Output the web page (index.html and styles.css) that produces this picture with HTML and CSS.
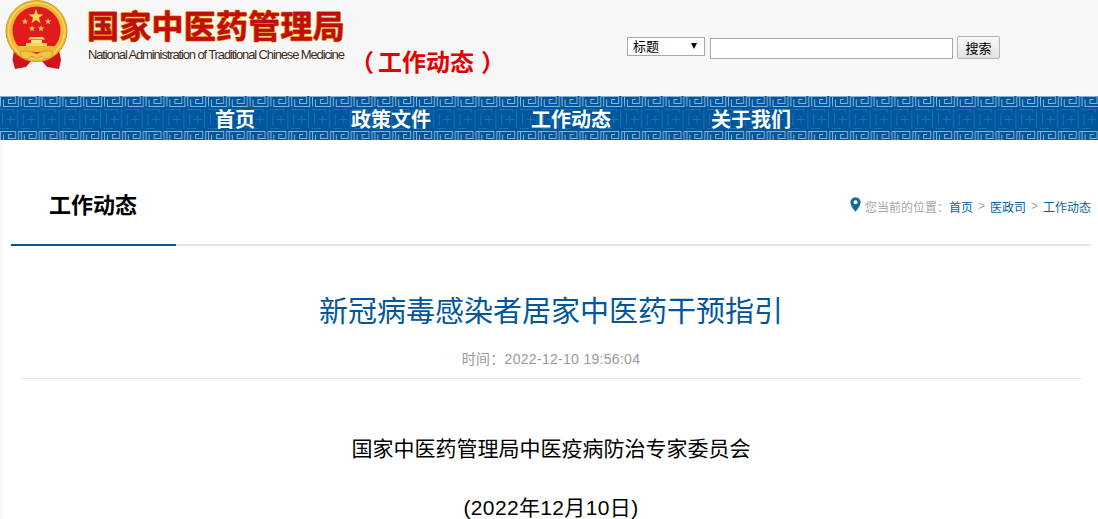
FILE: index.html
```html
<!DOCTYPE html>
<html lang="zh-CN">
<head>
  <meta charset="UTF-8">
  <title>新冠病毒感染者居家中医药干预指引</title>
  <link rel="stylesheet" href="styles.css">
</head>
<body>
  <!-- Top header -->
  <div class="header">
    <svg class="emblem" viewBox="0 0 72 72" width="72" height="72">
      <!-- ribbons -->
      <path d="M14 50 L12.5 60 L15 69 L26 67 L32 60 L41 60 L47 67 L59 69 L61 60 L59 50 Z" fill="#d0141c"/>
      <!-- ring -->
      <circle cx="36.5" cy="31" r="30.5" fill="#eeb931"/>
      <circle cx="36.5" cy="31" r="28" fill="none" stroke="#f7d46a" stroke-width="1.5"/>
      <circle cx="36.5" cy="31" r="30.5" fill="none" stroke="#d59a1c" stroke-width="1"/>
      <circle cx="36.5" cy="30.5" r="24" fill="#e01b1e"/>
      <!-- stars -->
      <polygon points="36,9 37.8,14.3 43.4,14.4 38.9,17.8 40.6,23.2 36,20 31.4,23.2 33.1,17.8 28.6,14.4 34.2,14.3" fill="#f9dc55"/>
      <polygon points="25,18 25.8,20.4 28.3,20.4 26.3,21.9 27,24.3 25,22.9 23,24.3 23.7,21.9 21.7,20.4 24.2,20.4" fill="#f5cf4c"/>
      <polygon points="48,18 48.8,20.4 51.3,20.4 49.3,21.9 50,24.3 48,22.9 46,24.3 46.7,21.9 44.7,20.4 47.2,20.4" fill="#f5cf4c"/>
      <polygon points="32,25 32.8,27.4 35.3,27.4 33.3,28.9 34,31.3 32,29.9 30,31.3 30.7,28.9 28.7,27.4 31.2,27.4" fill="#f5cf4c"/>
      <polygon points="41,25 41.8,27.4 44.3,27.4 42.3,28.9 43,31.3 41,29.9 39,31.3 39.7,28.9 37.7,27.4 40.2,27.4" fill="#f5cf4c"/>
      <!-- gate -->
      <path d="M30 37 H43 L45 39.5 H28 Z" fill="#f6d35a"/>
      <path d="M31 40 H42 V43 H31 Z" fill="#f9e08a"/>
      <path d="M26 43 H47 V46 H26 Z" fill="#f6d35a"/>
      <path d="M16 46 H57 L53 52 H20 Z" fill="#eeb931"/>
      <!-- knot -->
      <path d="M20 52 Q28 49 36.5 54 Q45 49 53 52 L51 58 Q44 60 41 56 L36.5 59 L32 56 Q29 60 22 58 Z" fill="#f1c644" stroke="#c8811a" stroke-width="0.6"/>
    </svg>
    <div class="brand">
      <div class="brand-cn">国家中医药管理局</div>
      <div class="brand-en">National Administration of Traditional Chinese Medicine</div>
    </div>
    <div class="section-name"><span class="paren-l">（</span>工作动态<span class="paren-r">）</span></div>
    <form class="search">
      <div class="select-wrap">
        <select class="search-type">
          <option>标题</option>
        </select>
      </div>
      <input type="text" class="search-input">
      <button type="button" class="search-btn">搜索</button>
    </form>
  </div>

  <!-- Nav -->
  <div class="nav">
    <svg class="nav-bg" width="1098" height="44">
      <defs>
        <pattern id="key" width="20.8" height="11" patternUnits="userSpaceOnUse">
          <path d="M0.5 10.5 V0.5 H15.5 V7.5 H8.5 V3.5 H12 M3.5 3.5 V10.5 H18.5 V0.5 H20.8" fill="none" stroke="#86b2d8" stroke-width="1"/>
        </pattern>
        <pattern id="fret" width="20.8" height="20" patternUnits="userSpaceOnUse">
          <path d="M0 0.5 H13.5 V3.5 M17.5 0.5 V19.5 M0 19.5 H9 M2.5 4.5 V16.5 M6.5 10.5 H14.5 M10.5 6.5 V14.5" fill="none" stroke="#1272ba" stroke-width="1"/>
        </pattern>
      </defs>
      <rect x="0" y="0" width="1098" height="11" fill="url(#key)"/>
      <g transform="translate(0 13)"><rect x="0" y="0" width="1098" height="20" fill="url(#fret)"/></g>
      <g transform="translate(0 35)"><rect x="0" y="0" width="1098" height="9" fill="url(#key)"/></g>
    </svg>
    <div class="nav-links">
      <a class="nav-item nav-home">首页</a>
      <a class="nav-item nav-docs">政策文件</a>
      <a class="nav-item nav-news">工作动态</a>
      <a class="nav-item">关于我们</a>
    </div>
  </div>

  <!-- Content -->
  <div class="content">
    <div class="tab-bar">
      <div class="tab-title">工作动态</div>
      <div class="crumbs">
        <svg class="pin" viewBox="0 0 12 16" width="11" height="15">
          <path fill-rule="evenodd" d="M6 0a5.6 5.6 0 0 0-5.6 5.6C.4 9.6 6 16 6 16s5.6-6.4 5.6-10.4A5.6 5.6 0 0 0 6 0zm0 3.4a2.2 2.2 0 1 1 0 4.4 2.2 2.2 0 0 1 0-4.4z" fill="#0f6a95"/>
        </svg>
        <span>您当前的位置：</span><a>首页</a><span class="sep">&gt;</span><a>医政司</a><span class="sep">&gt;</span><a>工作动态</a>
      </div>
    </div>

    <div class="article">
      <h1 class="article-title">新冠病毒感染者居家中医药干预指引</h1>
      <div class="article-time">时间：2022-12-10 19:56:04</div>
      <p class="article-org">国家中医药管理局中医疫病防治专家委员会</p>
      <p class="article-date">(2022年12月10日)</p>
    </div>
  </div>
</body>
</html>
```

FILE: styles.css
```css
* {
  box-sizing: border-box;
}

html, body {
  height: 519px;
  overflow: hidden;
}

body {
  margin: 0;
  background: #fff;
  font-family: "Liberation Sans", "Noto Sans CJK SC", sans-serif;
}

a {
  text-decoration: none;
}

/* Header */
.header {
  display: flex;
  height: 96px;
  background: #f7f7f7;
}

.brand {
  margin-left: 15px;
  padding-top: 9px;
  width: 263px;
}

.brand-cn {
  font-size: 32px;
  line-height: 36px;
  font-weight: bold;
  letter-spacing: 0.25px;
  color: #c00d0d;
  white-space: nowrap;
  -webkit-text-stroke: 0.5px #c00d0d;
  text-shadow: 1px 0 0 #f3c644, -1px 0 0 #f3c644, 0 1px 0 #f3c644, 0 -1px 0 #f3c644;
}

.brand-en {
  margin-top: 2px;
  margin-left: 1px;
  font-size: 13px;
  line-height: 16px;
  letter-spacing: -1.13px;
  color: #3e2f1e;
  white-space: nowrap;
}

.section-name {
  padding-top: 48px;
  width: 150px;
  font-size: 24px;
  line-height: 30px;
  font-weight: bold;
  color: #e60000;
  white-space: nowrap;
}

.paren-l {
  margin-right: 4px;
}

.paren-r {
  margin-left: 7px;
}

.search {
  display: flex;
  align-items: flex-start;
  margin-left: 127px;
  padding-top: 36px;
}

.select-wrap {
  position: relative;
  margin-top: 1px;
  margin-right: 5px;
}

/* the little black arrow of the select */
.select-wrap::after {
  content: "";
  position: absolute;
  top: 6px;
  right: 8px;
  border-left: 3px solid transparent;
  border-right: 3px solid transparent;
  border-top: 6px solid #000;
}

.search-type {
  display: block;
  width: 78px;
  height: 19px;
  padding: 0 0 0 5px;
  border: 1px solid #a9a9a9;
  border-radius: 0;
  background: #fff;
  font-size: 13px;
  font-family: inherit;
  appearance: none;
}

.search-input {
  width: 243px;
  height: 21px;
  margin-top: 2px;
  margin-right: 4px;
  border: 1px solid #a9a9a9;
  background: #fff;
}

.search-btn {
  width: 43px;
  height: 23px;
  padding: 0;
  border: 1px solid #b4b4b4;
  border-radius: 2px;
  background: linear-gradient(#f8f8f8, #e2e2e2);
  font-size: 13px;
  font-family: inherit;
  color: #000;
}

/* Nav */
.nav {
  position: relative;
  height: 44px;
  background: #02569b;
}

.nav-bg {
  position: absolute;
  top: 0;
  left: 0;
}

.nav-links {
  position: relative;
  display: flex;
  padding-left: 215px;
  padding-top: 2px;
  height: 44px;
}

.nav-item {
  font-size: 20px;
  line-height: 44px;
  font-weight: bold;
  color: #fff;
  white-space: nowrap;
}

.nav-home {
  width: 136px;
}

.nav-docs {
  width: 180px;
}

.nav-news {
  width: 180px;
}

/* Content */
.content {
  padding: 0 7px 0 9px;
  border-left: 2px solid #f7f7f7;
}

.tab-bar {
  display: flex;
  justify-content: space-between;
  height: 106px;
  border-bottom: 2px solid #e6e6e6;
}

.tab-title {
  width: 165px;
  height: 106px;
  padding-left: 38px;
  font-size: 22px;
  line-height: 132px;
  font-weight: bold;
  color: #000;
  border-bottom: 2px solid #02569b;
}

.crumbs {
  display: flex;
  align-items: center;
  height: 24px;
  margin-top: 54px;
  font-size: 12px;
  color: #a5a5a5;
  white-space: nowrap;
}

.crumbs a {
  color: #0b5ea8;
}

.pin {
  margin-right: 4px;
  margin-top: -3px;
}

.sep {
  margin: 0 5px;
}

/* Article */
.article {
  padding: 0 10px;
  text-align: center;
}

.article-title {
  margin: 0;
  padding-top: 48px;
  font-size: 29px;
  line-height: 36px;
  font-weight: normal;
  color: #02569b;
}

.article-time {
  height: 49px;
  border-bottom: 1px solid #e6e6e6;
  padding-top: 19px;
  font-size: 14px;
  line-height: 20px;
  letter-spacing: 0.3px;
  color: #999;
}

.article-org {
  margin: 54px 0 0;
  font-size: 21px;
  line-height: 32px;
  color: #000;
}

.article-date {
  margin: 27px 0 0;
  font-size: 21px;
  line-height: 32px;
  letter-spacing: 0.35px;
  color: #000;
}
```
